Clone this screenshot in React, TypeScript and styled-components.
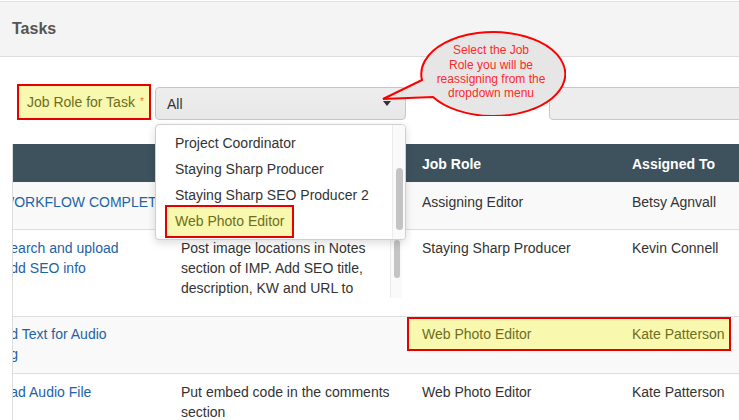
import { useLayoutEffect, useRef } from 'react';
import styled, { createGlobalStyle } from 'styled-components';

const GlobalStyle = createGlobalStyle`
	html, body {
		margin: 0;
		padding: 0;
		background: #fff;
		overflow: hidden;
	}
	body {
		font-family: "Liberation Sans", Arial, sans-serif;
		font-size: 14px;
		color: #333;
	}
`;

const Page = styled.div`
	position: relative;
	width: 739px;
	height: 420px;
	overflow: hidden;
`;

const PanelHeader = styled.header`
	margin-top: 1px;
	height: 54px;
	display: flex;
	align-items: center;
	padding-left: 12px;
	background: #f4f4f4;
	border-top: 1px solid #e3e3e3;
	border-bottom: 1px solid #dcdcdc;
	h1 {
		margin: 0;
		font-size: 16px;
		font-weight: 700;
		color: #555;
	}
`;

const FilterRow = styled.div`
	display: flex;
	align-items: flex-start;
	margin-top: 27px;
	padding-left: 17px;
	gap: 4px;
	& > * {
		flex-shrink: 0;
	}
`;

const MarkedLabel = styled.label`
	box-sizing: border-box;
	width: 134px;
	height: 36px;
	display: flex;
	align-items: center;
	padding: 0 8px;
	background: #f8f8ae;
	border: 2px solid #e60000;
	color: #6e6e1e;
	font-size: 14px;
	white-space: nowrap;
	.req {
		color: #e8743b;
		font-size: 10px;
		margin-left: 5px;
		position: relative;
		top: -1px;
	}
`;

const SelectWrap = styled.div`
	position: relative;
	margin-top: 3px;
`;

const SelectBox = styled.div`
	box-sizing: border-box;
	width: 251px;
	height: 33px;
	display: flex;
	align-items: center;
	padding: 0 14px 0 11px;
	border: 1px solid #c6c6c6;
	border-radius: 4px;
	background: linear-gradient(#eeeeee, #e7e7e7);
	color: #333;
`;

const Caret = styled.span`
	margin-left: auto;
	width: 0;
	height: 0;
	border-left: 4px solid transparent;
	border-right: 4px solid transparent;
	border-top: 5px solid #333;
`;

const Menu = styled.div`
	position: absolute;
	top: 37px;
	left: 0;
	z-index: 5;
	box-sizing: border-box;
	width: 251px;
	height: 116px;
	display: flex;
	overflow: hidden;
	background: #fff;
	border: 1px solid #cfcfcf;
	border-radius: 4px;
	box-shadow: 0 3px 9px rgba(0, 0, 0, 0.14);
`;

const MenuList = styled.div`
	flex: 1;
	height: 100%;
	box-sizing: border-box;
	overflow: hidden;
	padding: 5px 0;
`;

const Track = styled.div<{ $w: number; $top: number; $len: number }>`
	flex: 0 0 ${(p) => p.$w}px;
	box-sizing: border-box;
	height: 100%;
	padding-top: ${(p) => p.$top}px;
	background: #fafafa;
	border-left: 1px solid #ececec;
	&::after {
		content: '';
		display: block;
		margin: 0 auto;
		width: ${(p) => p.$w - 6}px;
		height: ${(p) => p.$len}px;
		border-radius: 4px;
		background: #c4c4c4;
	}
`;

const MenuItem = styled.div`
	height: 26px;
	display: flex;
	align-items: center;
	padding-left: 19px;
	color: #333;
	white-space: nowrap;
`;

const ItemMark = styled.span`
	display: inline-block;
	margin-left: -10px;
	padding: 0 8px;
	line-height: 29px;
	background: #f8f8ae;
	border: 2px solid #e60000;
	color: #6e6e1e;
`;

const AssignLabel = styled.label`
	width: 116px;
	margin: 5px 0 0 10px;
	line-height: 33px;
	text-align: right;
	color: #333;
`;

const TextInput = styled.div`
	box-sizing: border-box;
	width: 220px;
	height: 33px;
	margin: 3px 0 0 9px;
	border: 1px solid #c8c8c8;
	border-radius: 4px;
	background: #ededed;
`;

const Bubble = styled.div`
	position: absolute;
	left: 382px;
	top: 28px;
	width: 184px;
	height: 88px;
	z-index: 10;
	svg {
		display: block;
	}
	p {
		position: absolute;
		left: 37px;
		top: 2px;
		width: 144px;
		height: 84px;
		margin: 0;
		display: flex;
		align-items: center;
		justify-content: center;
		text-align: center;
		font-size: 12px;
		line-height: 14.3px;
		color: #ff2a2a;
	}
`;

const TableScroll = styled.div`
	margin: 22px 0 0 12px;
	border-left: 1px solid #dddddd;
	overflow: hidden;
	height: 278px;
`;

const Table = styled.table`
	border-collapse: separate;
	border-spacing: 0;
	table-layout: fixed;
	width: 851px;
`;

const Col = styled.col<{ $w: number }>`
	width: ${(p) => p.$w}px;
`;

const Th = styled.th`
	padding: 10px 10px 8px;
	line-height: 20px;
	background: #3e525e;
	color: #fff;
	font-weight: 700;
	text-align: left;
`;

const Tr = styled.tr<{ $alt?: boolean; $pt?: number; $pb?: number }>`
	background: ${(p) => (p.$alt ? '#f9f9f9' : '#fff')};
	& > td {
		padding-top: ${(p) => p.$pt ?? 8}px;
		padding-bottom: ${(p) => p.$pb ?? 8}px;
	}
`;

const Td = styled.td<{ $marked?: boolean }>`
	position: relative;
	vertical-align: top;
	padding: 8px 10px;
	line-height: 20px;
	border-bottom: 1px solid #dddddd;
	color: ${(p) => (p.$marked ? '#6e6e1e' : '#333')};
	span {
		position: relative;
		z-index: 1;
	}
`;

const TaskCell = styled(Td)`
	white-space: nowrap;
	a {
		color: #1d63a6;
		text-decoration: none;
	}
`;

const DescBox = styled.div`
	display: flex;
	height: 60px;
`;

const DescText = styled.div`
	flex: 1;
	overflow: hidden;
`;

const RowMark = styled.div`
	position: absolute;
	left: -5px;
	top: 0;
	width: 320px;
	height: 30px;
	background: #f8f8ae;
	border: 2px solid #e60000;
`;

const roles = [
	'All',
	'Assigning Editor',
	'Audio Producer',
	'Copy Editor',
	'Project Coordinator',
	'Staying Sharp Producer',
	'Staying Sharp SEO Producer 2',
	'Web Photo Editor',
];

function Callout() {
	return (
		<Bubble>
			<svg width="184" height="88" viewBox="0 0 184 88">
				<path
					d="M40 52 L1 71 L51 69 A72 42 0 1 0 40 52 Z"
					fill="#e6e6e6"
					stroke="#ff0000"
					strokeWidth="2"
				/>
			</svg>
			<p>
				Select the Job
				<br />
				Role you will be
				<br />
				reassigning from the
				<br />
				dropdown menu
			</p>
		</Bubble>
	);
}

export default function App() {
	const listRef = useRef<HTMLDivElement>(null);
	const tableRef = useRef<HTMLDivElement>(null);

	useLayoutEffect(() => {
		if (listRef.current) listRef.current.scrollTop = listRef.current.scrollHeight;
		if (tableRef.current) tableRef.current.scrollLeft = 22;
	}, []);

	return (
		<Page>
			<GlobalStyle />
			<PanelHeader>
				<h1>Tasks</h1>
			</PanelHeader>

			<FilterRow>
				<MarkedLabel>
					Job Role for Task<span className="req">*</span>
				</MarkedLabel>
				<SelectWrap>
					<SelectBox>
						All
						<Caret />
					</SelectBox>
					<Menu>
						<MenuList ref={listRef}>
							{roles.map((r) => (
								<MenuItem key={r}>
									{r === 'Web Photo Editor' ? <ItemMark>{r}</ItemMark> : r}
								</MenuItem>
							))}
						</MenuList>
						<Track $w={13} $top={43} $len={62} />
					</Menu>
				</SelectWrap>
				<AssignLabel>Assigned To</AssignLabel>
				<TextInput />
			</FilterRow>

			<TableScroll ref={tableRef}>
				<Table>
					<colgroup>
						<Col $w={180} />
						<Col $w={241} />
						<Col $w={210} />
						<Col $w={220} />
					</colgroup>
					<thead>
						<tr>
							<Th></Th>
							<Th>Description</Th>
							<Th>Job Role</Th>
							<Th>Assigned To</Th>
						</tr>
					</thead>
					<tbody>
						<Tr $alt $pt={10} $pb={17}>
							<TaskCell>
								<a href="#">WORKFLOW COMPLETE</a>
							</TaskCell>
							<Td></Td>
							<Td>Assigning Editor</Td>
							<Td>Betsy Agnvall</Td>
						</Tr>
						<Tr $pb={18}>
							<TaskCell>
								<a href="#">
									Search and upload
									<br />
									Add SEO info
								</a>
							</TaskCell>
							<Td>
								<DescBox>
									<DescText>
										Post image locations in Notes section of IMP. Add SEO title,
										description, KW and URL to Notes section of IMP.
									</DescText>
									<Track $w={12} $top={2} $len={38} />
								</DescBox>
							</Td>
							<Td>Staying Sharp Producer</Td>
							<Td>Kevin Connell</Td>
						</Tr>
						<Tr $alt $pt={7} $pb={9}>
							<TaskCell>
								<a href="#">
									Ad Text for Audio
									<br />
									Ag
								</a>
							</TaskCell>
							<Td></Td>
							<Td $marked>
								<RowMark />
								<span>Web Photo Editor</span>
							</Td>
							<Td $marked>
								<span>Kate Patterson</span>
							</Td>
						</Tr>
						<Tr>
							<TaskCell>
								<a href="#">Pad Audio File</a>
							</TaskCell>
							<Td>Put embed code in the comments section</Td>
							<Td>Web Photo Editor</Td>
							<Td>Kate Patterson</Td>
						</Tr>
					</tbody>
				</Table>
			</TableScroll>

			<Callout />
		</Page>
	);
}
